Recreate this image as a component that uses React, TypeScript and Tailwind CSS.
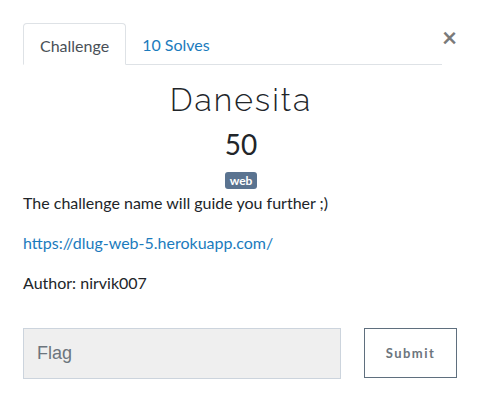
import React, { useState } from 'react';

const App: React.FC = () => {
  const [flag, setFlag] = useState('');

  return (
    <div
      className="w-[482px] h-[420px] bg-white px-[23px] pt-[23px] text-[#212529]"
      style={{ fontFamily: 'Lato, "Open Sans", sans-serif' }}
    >
      <div className="flex items-start">
        <ul className="flex w-[420px] border-b border-[#dee2e6]">
          <li className="-mb-px">
            <a className="block h-[42px] px-4 pt-[10px] rounded-t border border-[#dee2e6] border-b-white bg-white text-[16px] text-[#495057]">
              Challenge
            </a>
          </li>
          <li>
            <a className="block h-[41px] px-4 pt-[10px] text-[16px] text-[#1b7bbd]">10 Solves</a>
          </li>
        </ul>
        <button className="ml-auto mr-[2px] mt-[1px] text-[26px] leading-none font-bold text-[#7a7a7a]">
          ×
        </button>
      </div>

      <div className="text-center">
        <h2
          className="mt-[16px] text-[32px] leading-[38px] font-light tracking-[2px]"
          style={{ fontFamily: 'Raleway, Lato, sans-serif' }}
        >
          Danesita
        </h2>
        <h3 className="mt-[8px] text-[28px] leading-[34px]">50</h3>
        <span className="inline-block mt-[11px] h-[17px] px-[5px] rounded-[3px] bg-[#5a7390] text-white text-[12px] leading-[17px] font-bold">
          web
        </span>
      </div>

      <div className="text-[16px] leading-6">
        <p>The challenge name will guide you further ;)</p>
        <p className="mt-4">
          <a className="text-[#1b7bbd]">https://dlug-web-5.herokuapp.com/</a>
        </p>
        <p className="mt-4">Author: nirvik007</p>
      </div>

      <div className="flex mt-[33px]">
        <input
          value={flag}
          onChange={(e) => setFlag(e.target.value)}
          placeholder="Flag"
          className="w-[318px] h-[51px] px-[13px] bg-[#efefef] border border-[#ccd4dd] text-[18px] placeholder-[#6c757d] outline-none"
          style={{ fontFamily: '"Liberation Sans", Arial, sans-serif' }}
        />
        <button className="ml-[23px] w-[93px] h-[50px] pt-[2px] border border-[#5f6f7e] text-[13px] font-bold tracking-[1.5px] text-[#6c757d]">
          Submit
        </button>
      </div>
    </div>
  );
};

export default App;
